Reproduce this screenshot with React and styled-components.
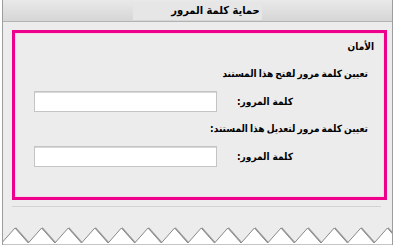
import React from 'react'
import styled, { createGlobalStyle } from 'styled-components'

const GlobalStyle = createGlobalStyle`
  html, body {
    margin: 0;
    padding: 0;
    background: #ffffff;
  }
  body {
    font-family: "DejaVu Sans Condensed", "DejaVu Sans", "Liberation Sans", sans-serif;
    font-stretch: condensed;
  }
`;

const Window = styled.div`
  position: relative;
  width: 389px;
  height: 245px;
  margin-left: 2px;
  background: #ececec;
  border-left: 1px solid #9d9d9d;
  border-right: 1px solid #9d9d9d;
  overflow: hidden;
`;

const TitleBar = styled.div`
  height: 21px;
  display: flex;
  align-items: center;
  justify-content: center;
  background: linear-gradient(#e9e9e9, #d6d6d6);
  border-bottom: 1px solid #b3b3b3;
`;

const Title = styled.span`
  font-size: 11px;
  font-weight: bold;
  line-height: 18px;
  color: #000;
  padding: 0 2px 0 38px;
  background: #e6e6e6;
  direction: rtl;
`;

const Body = styled.div`
  padding: 8px 5px 0 9px;
`;

const Section = styled.div`
  height: 164px;
  border: 3px solid #ec008c;
  display: flex;
  flex-direction: column;
  direction: rtl;
  box-shadow: inset 0 0 0 1px #f7d6e8;
`;

const Line = styled.div`
  font-size: 10px;
  font-weight: bold;
  line-height: 14px;
  color: #000;
  word-spacing: -1px;
  margin-top: ${({ top }) => top}px;
  padding-right: ${({ indent }) => indent}px;
`;

const FieldRow = styled.div`
  display: flex;
  align-items: center;
  justify-content: space-between;
  margin-top: 10px;
  padding-right: 91px;
  padding-left: 19px;
`;

const Label = styled.span`
  font-size: 10px;
  font-weight: bold;
  color: #000;
`;

const Input = styled.input`
  box-sizing: border-box;
  width: 183px;
  height: 21px;
  background: #fff;
  border: 1px solid #c4c4c4;
  box-shadow: inset 0 1px 0 #d8d8d8;
  outline: none;
`;

const Separator = styled.div`
  height: 1px;
  margin: 6px 6px 0 0;
  background: #d3d3d3;
`;

const Torn = styled.svg`
  position: absolute;
  left: -3px;
  bottom: 0;
`;

function TornEdge() {
  const period = 26.6;
  let pts = [];
  for (let x = 15 - period; x < 420; x += period) {
    pts.push(`${x.toFixed(1)},13`);
    pts.push(`${(x + period / 2).toFixed(1)},28`);
  }
  const line = pts.join(' ');
  return (
    <Torn width="400" height="30" viewBox="0 0 400 30">
      <polyline points={line} fill="none" stroke="#5a5a5a" strokeWidth="3" transform="translate(1,1.5)" opacity="0.55" />
      <polygon points={`0,30 ${line} 400,30`} fill="#ffffff" stroke="#8a8a8a" strokeWidth="1" />
    </Torn>
  );
}

export default function App() {
  return (
    <>
      <GlobalStyle />
      <Window>
        <TitleBar>
          <Title>حماية كلمة المرور</Title>
        </TitleBar>
        <Body>
          <Section>
            <Line top={7} indent={10}>الأمان</Line>
            <Line top={13} indent={16}>تعيين كلمة مرور لفتح هذا المستند</Line>
            <FieldRow>
              <Label>كلمة المرور:</Label>
              <Input type="password" />
            </FieldRow>
            <Line top={10} indent={16}>تعيين كلمة مرور لتعديل هذا المستند:</Line>
            <FieldRow>
              <Label>كلمة المرور:</Label>
              <Input type="password" />
            </FieldRow>
          </Section>
          <Separator />
        </Body>
        <TornEdge />
      </Window>
    </>
  )
}
